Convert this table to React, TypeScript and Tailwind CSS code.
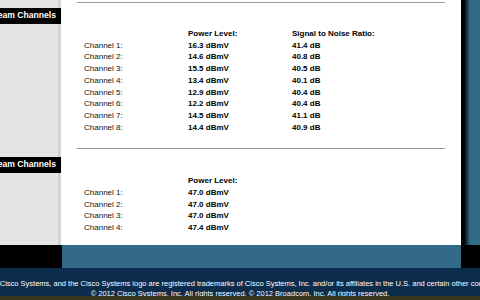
import React from 'react';

const downstream = [
  ['16.3 dBmV', '41.4 dB'],
  ['14.6 dBmV', '40.8 dB'],
  ['15.5 dBmV', '40.5 dB'],
  ['13.4 dBmV', '40.1 dB'],
  ['12.9 dBmV', '40.4 dB'],
  ['12.2 dBmV', '40.4 dB'],
  ['14.5 dBmV', '41.1 dB'],
  ['14.4 dBmV', '40.9 dB'],
];

const upstream = ['47.0 dBmV', '47.0 dBmV', '47.0 dBmV', '47.4 dBmV'];

const SideLabel = ({ text, className }: { text: string; className: string }) => (
  <div className={`h-[16px] w-[61px] bg-black text-white flex justify-end items-center overflow-hidden whitespace-nowrap pr-[5px] text-[8.6px] font-bold ${className}`}>
    <span className="shrink-0">{text}</span>
  </div>
);

export default function App() {
  return (
    <div className="w-[480px] h-[300px] overflow-hidden bg-white text-[8px] leading-[11.7px]" style={{ fontFamily: '"Liberation Sans", Arial, sans-serif' }}>
      {/* main */}
      <div className="flex h-[245px]">
        <div className="w-[62px] shrink-0 flex flex-col bg-[linear-gradient(to_right,#e4e4e4_0,#e4e4e4_57px,#c9c9c9_60px,#f4f4f4_61px,#ffffff_62px)]">
          <SideLabel text="Downstream Channels" className="mt-[8px]" />
          <SideLabel text="Upstream Channels" className="mt-[133px]" />
        </div>

        <div className="flex-1 bg-white text-black">
          <div className="ml-[15px] w-[368px] mt-[2px] border-t border-[#9a9a9a]" />

          <div className="ml-[22px] mt-[25px] grid grid-cols-[104px_104px_auto]">
            <div />
            <div className="font-bold">Power Level:</div>
            <div className="font-bold">Signal to Noise Ratio:</div>
            {downstream.map(([p, s], i) => (
              <React.Fragment key={i}>
                <div className="text-[#111]">Channel {i + 1}:</div>
                <div className="font-bold">{p}</div>
                <div className="font-bold">{s}</div>
              </React.Fragment>
            ))}
          </div>

          <div className="ml-[15px] w-[368px] mt-[15px] border-t border-[#9a9a9a]" />

          <div className="ml-[22px] mt-[26px] grid grid-cols-[104px_104px_auto]">
            <div />
            <div className="font-bold">Power Level:</div>
            <div />
            {upstream.map((p, i) => (
              <React.Fragment key={i}>
                <div className="text-[#111]">Channel {i + 1}:</div>
                <div className="font-bold">{p}</div>
                <div />
              </React.Fragment>
            ))}
          </div>
        </div>

        <div className="w-[19px] shrink-0 bg-[linear-gradient(to_right,#000_0,#000_3px,#336a87_9px)]" />
      </div>

      {/* band */}
      <div className="flex h-[23px]">
        <div className="w-[62px] bg-black" />
        <div className="flex-1 bg-[#336a87]" />
        <div className="w-[19px] bg-black" />
      </div>

      {/* footer */}
      <div className="h-[28px] bg-[#0c2c4c] text-white text-[7.5px] leading-[10px] pt-[11px] flex flex-col items-center overflow-hidden whitespace-nowrap">
        <div className="shrink-0">Cisco, Cisco Systems, and the Cisco Systems logo are registered trademarks of Cisco Systems, Inc. and/or its affiliates in the U.S. and certain other countries.</div>
        <div className="shrink-0">© 2012 Cisco Systems, Inc. All rights reserved. © 2012 Broadcom, Inc. All rights reserved.</div>
      </div>
      <div className="h-[4px] bg-[#38361c]" />
    </div>
  );
}
